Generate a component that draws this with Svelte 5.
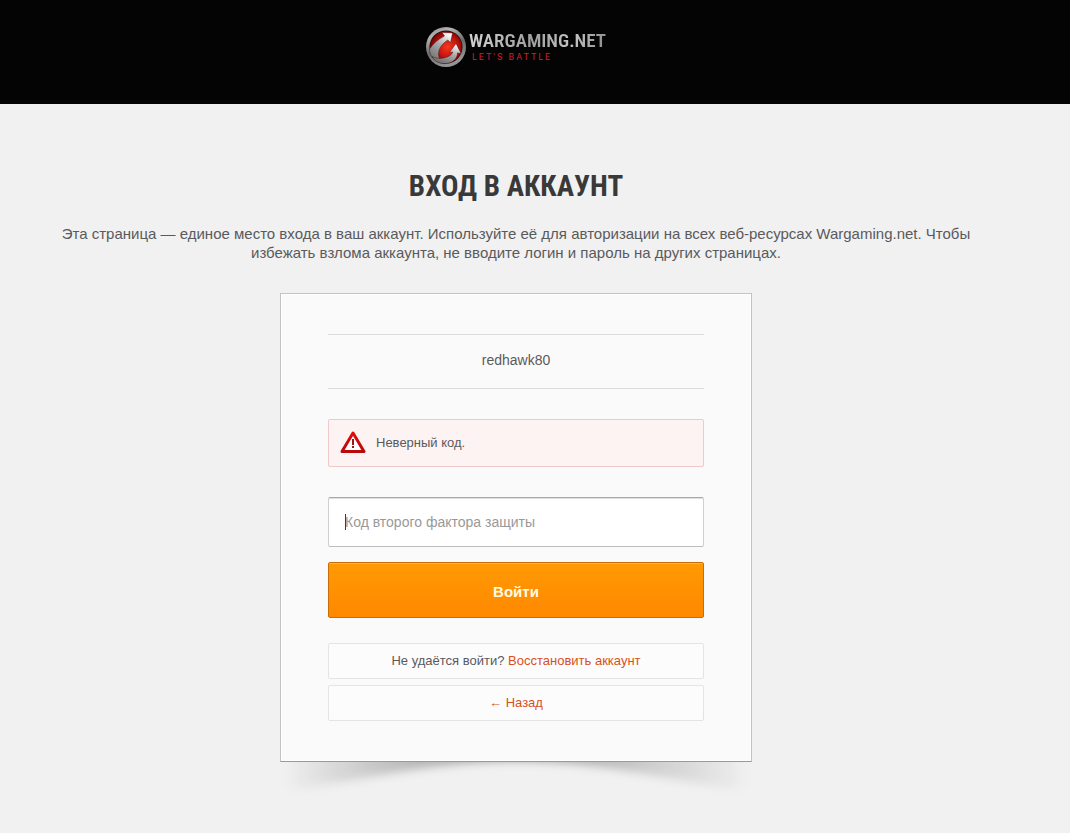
<script>
  let code = $state('');
  let field;

  $effect(() => {
    field.focus();
  });
</script>

<header>
  <a class="logo" href="#home" aria-label="Wargaming.net">
    <svg class="emblem" viewBox="0 0 40 40" aria-hidden="true">
      <defs>
        <linearGradient id="rim" x1="0" y1="0" x2="0.4" y2="1">
          <stop offset="0" stop-color="#7d7d7d" />
          <stop offset="0.25" stop-color="#b4b4b4" />
          <stop offset="0.6" stop-color="#6b6b6b" />
          <stop offset="1" stop-color="#959595" />
        </linearGradient>
        <radialGradient id="core" cx="0.55" cy="0.5" r="0.55">
          <stop offset="0" stop-color="#f8371c" />
          <stop offset="0.55" stop-color="#c81510" />
          <stop offset="1" stop-color="#6c0505" />
        </radialGradient>
        <linearGradient id="steel" x1="0.8" y1="0" x2="0.2" y2="1">
          <stop offset="0" stop-color="#ffffff" />
          <stop offset="0.45" stop-color="#a8a8a8" />
          <stop offset="1" stop-color="#6a6a6a" />
        </linearGradient>
      </defs>
      <circle cx="20" cy="20" r="20" fill="url(#rim)" />
      <circle cx="20" cy="20" r="16.500" fill="#2a0505" />
      <circle cx="20" cy="20" r="15.800" fill="url(#core)" />
      <path d="M16 5.500 L26.500 6 L24.500 15.500 L21.800 13 C16 16.500 12.500 22 12.500 27 C12.500 31 15 34.500 19 36.500 C10 36.500 3 29 3.500 22 C7 16.500 12 12.500 18.500 9 Z" fill="url(#steel)" stroke="#400" stroke-width="0.4" />
      <path d="M30 16.500 L35 26.500 L31.500 25.800 C31.500 32 26 36.600 19 36.600 C13 36.600 8 34 6 29.500 C10 31.500 14 31.800 17.500 31 C22 30 25.500 28.500 26.800 25 L23.500 25.500 Z" fill="url(#steel)" stroke="#400" stroke-width="0.4" />
    </svg>
    <span class="wordmark">
      <span class="name">WARGAMING.NET</span>
      <span class="slogan">LET'S BATTLE</span>
    </span>
  </a>
</header>

<main>
  <h1>Вход в аккаунт</h1>
  <p class="intro">
    Эта страница — единое место входа в ваш аккаунт. Используйте её для авторизации на всех веб-ресурсах Wargaming.net. Чтобы избежать взлома аккаунта, не вводите логин и пароль на других страницах.
  </p>

  <div class="panel">
    <form class="card" onsubmit={(e) => e.preventDefault()}>
      <p class="user">redhawk80</p>

      <div class="error" role="alert">
        <svg viewBox="0 0 26 23" aria-hidden="true">
          <defs>
            <linearGradient id="warn" x1="0" y1="0" x2="0" y2="1">
              <stop offset="0" stop-color="#e60808" />
              <stop offset="1" stop-color="#b80c0c" />
            </linearGradient>
          </defs>
          <path d="M13 2 L24 20.500 H2 Z" fill="#fff" stroke="url(#warn)" stroke-width="3" stroke-linejoin="round" />
          <path d="M12 8 H14 V14 H12 Z M12 15 H14 V17 H12 Z" fill="#9d1414" />
        </svg>
        <span>Неверный код.</span>
      </div>

      <input
        type="text"
        aria-label="Код второго фактора защиты"
        placeholder="Код второго фактора защиты"
        autocomplete="one-time-code"
        bind:value={code}
        bind:this={field}
      />
      <button type="submit">Войти</button>

      <p class="option">Не удаётся войти? <a href="#restore">Восстановить аккаунт</a></p>
      <p class="option"><a href="#back">← Назад</a></p>
    </form>

    <svg class="shadow" viewBox="0 0 472 44" preserveAspectRatio="none" aria-hidden="true">
      <defs>
        <linearGradient id="fade">
          <stop offset="0" stop-color="#000" stop-opacity="0.02" />
          <stop offset="0.22" stop-color="#000" stop-opacity="0.2" />
          <stop offset="0.5" stop-color="#000" stop-opacity="0.4" />
          <stop offset="0.78" stop-color="#000" stop-opacity="0.16" />
          <stop offset="1" stop-color="#000" stop-opacity="0.02" />
        </linearGradient>
        <filter id="soft" x="-5%" y="-60%" width="110%" height="220%">
          <feGaussianBlur stdDeviation="8 5" />
        </filter>
      </defs>
      <path d="M12 -14 H460 V28 C390 18 310 -2 236 -2 C162 -2 82 18 12 28 Z" fill="url(#fade)" filter="url(#soft)" />
    </svg>
  </div>
</main>

<style>
  :global(body) {
    margin: 0;
    background: #f1f1f1;
    color: #5a5a5c;
    font-family: 'Liberation Sans', Arial, sans-serif;
    font-size: 14px;
  }

  header {
    box-sizing: border-box;
    height: 104px;
    padding: 27px 38px 0 0;
    background: #040404;
  }

  .logo {
    display: flex;
    justify-content: center;
    gap: 3px;
    text-decoration: none;
  }

  .emblem {
    width: 40px;
    height: 40px;
  }

  .wordmark {
    display: flex;
    flex-direction: column;
    padding-top: 3px;
  }

  .name {
    font: 600 19px/22px 'Roboto Condensed', Roboto, sans-serif;
    color: transparent;
    background: linear-gradient(100deg, #d4d4d4, #a0a0a0 45%, #c4c4c4 75%, #8c8c8c);
    background-clip: text;
  }

  .slogan {
    padding-left: 3px;
    font: 9px/10px Roboto, sans-serif;
    letter-spacing: 2px;
    color: #d01c34;
  }

  main {
    padding: 63px 96px 71px 58px;
    text-align: center;
  }

  h1 {
    margin: 0 0 19px;
    font: 700 29px/38px 'Roboto Condensed', 'Liberation Sans Narrow', 'Arial Narrow', sans-serif;
    text-transform: uppercase;
    color: #39393a;
  }

  .intro {
    margin: 0 0 31px;
    font-size: 15px;
    line-height: 19px;
  }

  .panel {
    position: relative;
    max-width: 472px;
    margin: 0 auto;
  }

  .card {
    position: relative;
    z-index: 1;
    box-sizing: border-box;
    padding: 40px 47px;
    border: 1px solid #c3c3c3;
    border-bottom-color: #999;
    background: #fafafa;
    box-shadow: inset 0 0 0 1px #fff;
  }

  .shadow {
    position: absolute;
    top: 100%;
    left: 0;
    width: 100%;
    height: 44px;
  }

  .user {
    margin: 0 0 30px;
    padding: 15px 0 17px;
    border: solid #dadada;
    border-width: 1px 0;
    line-height: 21px;
  }

  .error {
    display: flex;
    align-items: center;
    gap: 10px;
    box-sizing: border-box;
    height: 48px;
    margin-bottom: 30px;
    padding: 0 11px 2px;
    border: 1px solid #eecaca;
    border-radius: 2px;
    background: #fdf3f2;
    font-size: 13px;
  }

  .error svg {
    width: 26px;
    height: 23px;
  }

  input {
    display: block;
    box-sizing: border-box;
    width: 100%;
    height: 50px;
    margin: 0 0 15px;
    padding: 0 16px;
    border: 1px solid #d0d0d0;
    border-top-color: #a8a8a8;
    border-bottom-color: #bdbdbd;
    border-radius: 2px;
    outline: none;
    background: #fff;
    box-shadow: inset 0 1px 0 #e0e0e0;
    font: inherit;
    color: #39393a;
  }

  input:placeholder-shown {
    background: linear-gradient(#39393a, #39393a) 16px center / 1px 16px no-repeat #fff;
    caret-color: transparent;
  }

  input::placeholder {
    color: #999;
    opacity: 1;
  }

  button {
    display: block;
    width: 100%;
    height: 56px;
    margin: 0 0 25px;
    padding: 3px 0 0;
    border: 1px solid #c86e08;
    border-radius: 2px;
    background: linear-gradient(#ff9a03, #ff8800);
    box-shadow: inset 0 1px 0 #ffb340;
    font: 700 15px/20px 'Liberation Sans', Arial, sans-serif;
    color: #fffbe6;
    cursor: pointer;
  }

  .option {
    margin: 0;
    padding: 8px 0;
    border: 1px solid #e4e4e4;
    border-radius: 2px;
    background: #fcfcfc;
    font-size: 13px;
    line-height: 18px;
  }

  .option + .option {
    margin-top: 6px;
  }

  .option a {
    color: #d9501e;
    text-decoration: none;
  }
</style>
